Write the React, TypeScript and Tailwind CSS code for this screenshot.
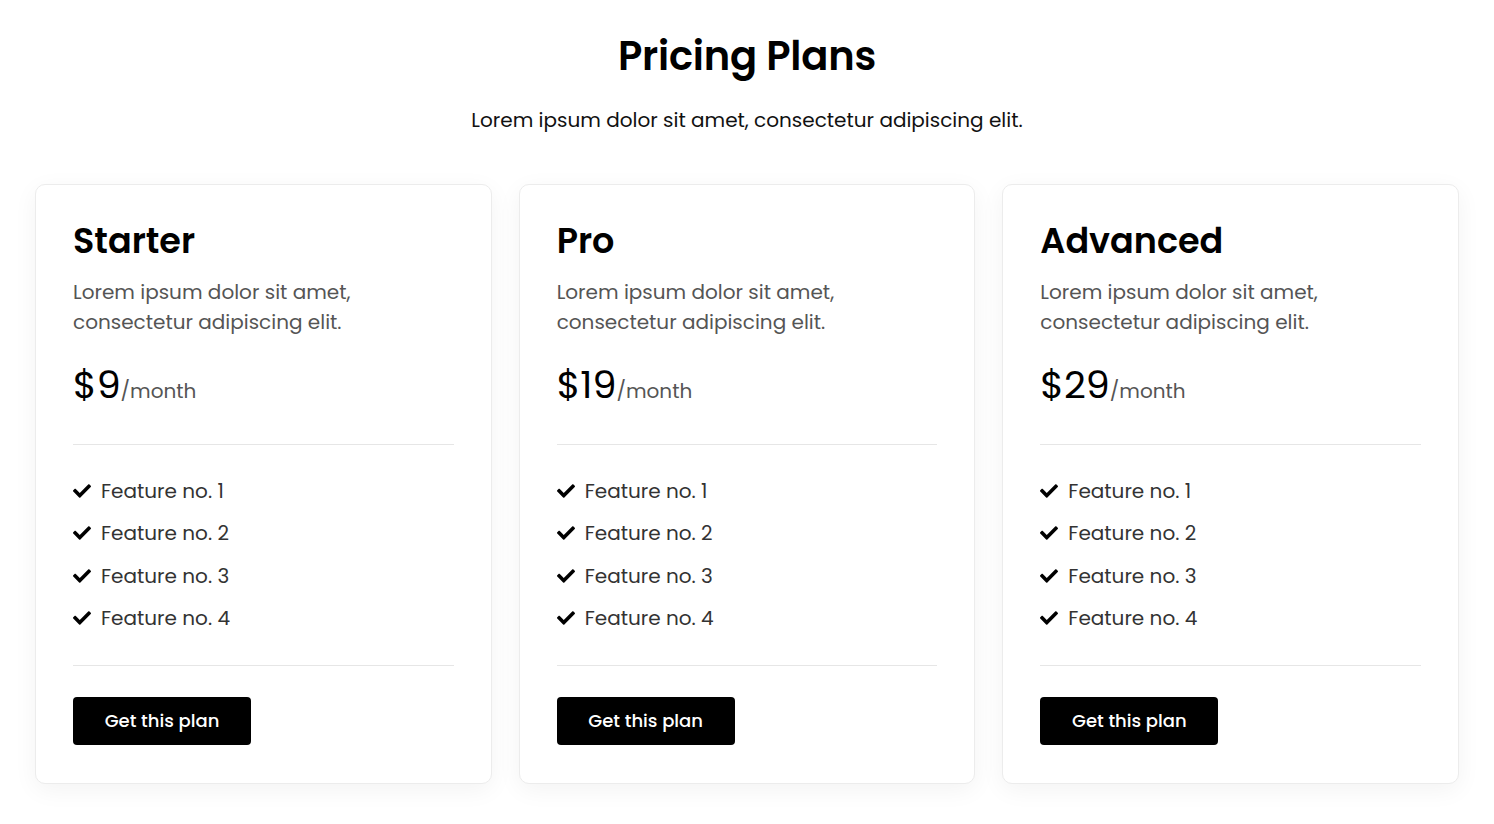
import React from "react";
import { FaCheck } from "react-icons/fa";

const plans = [
  { name: "Starter", price: "$9" },
  { name: "Pro", price: "$19" },
  { name: "Advanced", price: "$29" },
];

const features = ["Feature no. 1", "Feature no. 2", "Feature no. 3", "Feature no. 4"];

export default function App() {
  return (
    <div
      className="min-h-[824px] bg-white text-black"
      style={{ fontFamily: "Poppins, Inter, 'Noto Sans', sans-serif" }}
    >
      <div className="pt-[30px] text-center">
        <h1 className="text-[40px] leading-[52px] font-semibold tracking-[-0.2px]">Pricing Plans</h1>
        <p className="mt-[23px] text-[20px] leading-[30px] text-[#111]">
          Lorem ipsum dolor sit amet, consectetur adipiscing elit.
        </p>
      </div>
      <div className="mt-[49px] grid grid-cols-3 gap-[27px] px-[35px]">
        {plans.map((p) => (
          <div
            key={p.name}
            className="rounded-[10px] border border-[#ececec] bg-white px-[37px] pt-[34px] pb-[38px] shadow-[0_6px_24px_rgba(0,0,0,0.05)]"
          >
            <h2 className="text-[35px] leading-[44px] font-semibold">{p.name}</h2>
            <p className="mt-[14px] text-[20px] leading-[30px] text-[#555]">
              Lorem ipsum dolor sit amet,
              <br />
              consectetur adipiscing elit.
            </p>
            <div className="mt-[23px] flex items-baseline">
              <span className="text-[38px] leading-[50px]">{p.price}</span>
              <span className="text-[20px] text-[#555]">/month</span>
            </div>
            <div className="mt-[34px] h-px bg-[#e6e6e6]" />
            <ul className="mt-[31px] flex flex-col gap-[12.3px]">
              {features.map((f) => (
                <li key={f} className="flex items-center gap-[10px] text-[20px] leading-[30px] text-[#333]">
                  <FaCheck className="h-[18px] w-[18px] text-black" />
                  <span>{f}</span>
                </li>
              ))}
            </ul>
            <div className="mt-[32px] h-px bg-[#e6e6e6]" />
            <button className="mt-[31px] h-[48px] w-[178px] rounded-[4px] bg-black text-[18px] font-medium text-white">
              Get this plan
            </button>
          </div>
        ))}
      </div>
    </div>
  );
}
